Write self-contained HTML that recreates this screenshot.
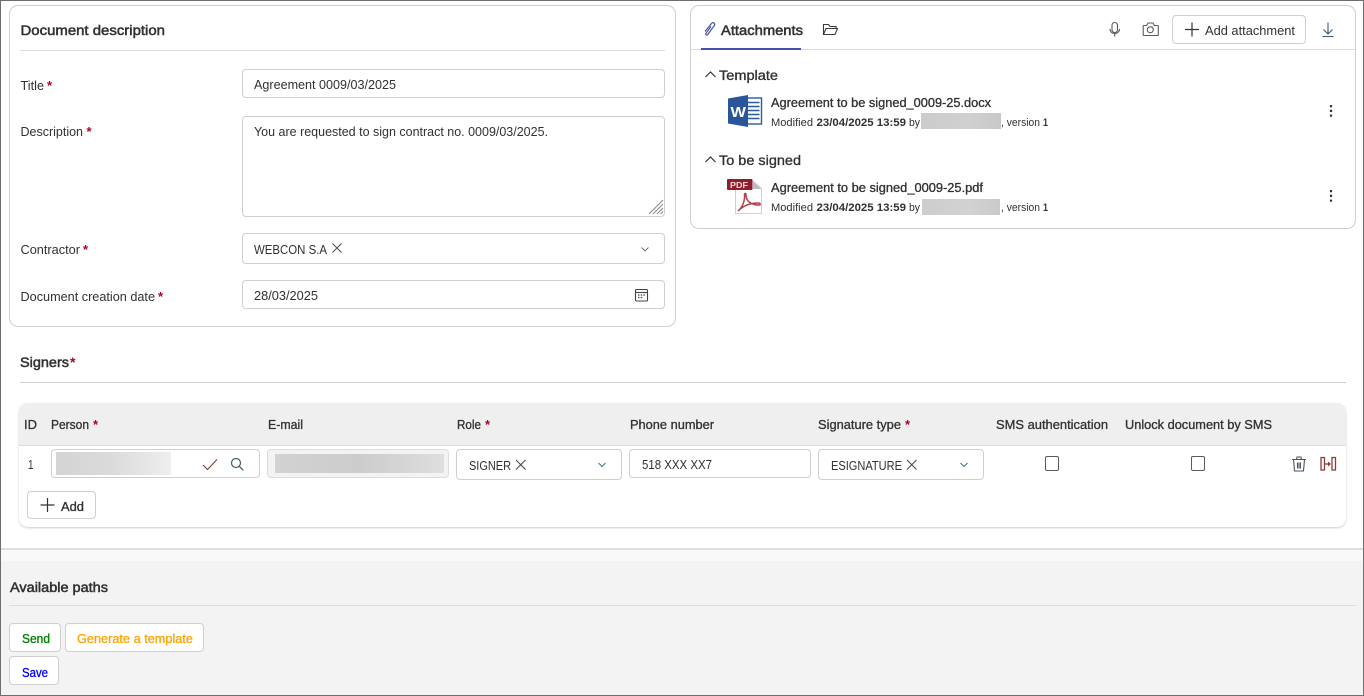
<!DOCTYPE html>
<html lang="en"><head><meta charset="utf-8"><title>Document</title>
<style>
html,body{margin:0;padding:0;background:#fff}
#p{position:relative;width:1364px;height:696px;overflow:hidden;background:#fff;font-family:"Liberation Sans",sans-serif}
#p div{position:absolute;box-sizing:border-box}
.card{border:1px solid #cfcfcf;border-radius:9px;background:#fff}
.in{border:1px solid #cfcfcf;border-radius:4px;background:#fff}
.ln{height:1px;background:#dcdcdc}
svg{position:absolute;left:0;top:0}
text{font-family:"Liberation Sans",sans-serif;font-size:13px;fill:#323130}
.b{font-weight:400;stroke:#323130;stroke-width:.5px;font-size:13.5px}
.h{stroke:#323130;stroke-width:.32px}
.s{font-size:11px}
.sb{font-size:11px;font-weight:700}
.r{fill:#b00020;font-weight:700;font-size:13px}
.ic{fill:none;stroke:#4b4b4b;stroke-width:1.1}
</style></head><body><div id="p">
<div style="left:1px;top:548px;width:1362px;height:13px;background:#f9f9f9;border-top:2px solid #dedede"></div>
<div style="left:1px;top:561px;width:1362px;height:134px;background:#f3f3f3"></div>
<div class="card" style="left:9px;top:5px;width:667px;height:322px"></div>
<div class="card" style="left:690px;top:5px;width:666px;height:224px"></div>
<div class="ln" style="left:20px;top:50px;width:645px"></div>
<div class="ln" style="left:691px;top:49px;width:664px"></div>
<div style="left:701px;top:48px;width:100px;height:2px;background:#4552a8"></div>
<div class="in" style="left:242px;top:69px;width:423px;height:29px"></div>
<div class="in" style="left:242px;top:116px;width:423px;height:101px"></div>
<div class="in" style="left:242px;top:233px;width:423px;height:31px"></div>
<div class="in" style="left:242px;top:280px;width:423px;height:29px"></div>
<div class="in" style="left:1172px;top:15px;width:134px;height:29px"></div>
<div style="left:921px;top:113px;width:80px;height:16px;background:linear-gradient(90deg,#cbcbcb,#d0d0d0 60%,#c8c8c8)"></div>
<div style="left:922px;top:199px;width:78px;height:16px;background:linear-gradient(90deg,#cdcdcd,#d2d2d2 60%,#cacaca)"></div>
<div class="ln" style="left:20px;top:382px;width:1326px;background:#cfcfcf"></div>
<div style="left:19px;top:403px;width:1327px;height:124px;border-radius:9px;background:#fff;box-shadow:0 1px 2px rgba(0,0,0,.2);overflow:hidden">
<div style="left:0;top:0;width:1327px;height:43px;background:#efefef;border-bottom:1px solid #dcdcdc"></div></div>
<div class="in" style="left:51px;top:449px;width:209px;height:29px"></div>
<div style="left:56px;top:452px;width:115px;height:23px;background:linear-gradient(90deg,#d4d4d4,#dadada 45%,#e4e4e4 75%,#efefef)"></div>
<div class="in" style="left:267px;top:449px;width:182px;height:29px;background:#f3f3f3;border-color:#dcdcdc"></div>
<div style="left:275px;top:454px;width:169px;height:19px;background:linear-gradient(90deg,#d2d2d2,#cccccc 50%,#dedede)"></div>
<div class="in" style="left:456px;top:449px;width:166px;height:31px"></div>
<div class="in" style="left:629px;top:449px;width:182px;height:29px"></div>
<div class="in" style="left:818px;top:449px;width:166px;height:31px"></div>
<div class="in" style="left:1045px;top:456px;width:14px;height:15px;border-color:#5a5a5a;border-radius:2px"></div>
<div class="in" style="left:1191px;top:456px;width:14px;height:15px;border-color:#5a5a5a;border-radius:2px"></div>
<div class="in" style="left:27px;top:491px;width:69px;height:28px"></div>
<div class="ln" style="left:9px;top:605px;width:1347px;background:#dcdcdc"></div>
<div class="in" style="left:9px;top:623px;width:52px;height:29px"></div>
<div class="in" style="left:65px;top:623px;width:139px;height:29px"></div>
<div class="in" style="left:9px;top:656px;width:50px;height:29px"></div>
<div style="left:0;top:0;width:1364px;height:696px;border:1px solid #6e6e6e"></div>

<svg width="1364" height="696" viewBox="0 0 1364 696">
<text class="b" x="20.5" y="35" textLength="144.5" lengthAdjust="spacingAndGlyphs">Document description</text>
<text x="20.5" y="90" textLength="23.5" lengthAdjust="spacingAndGlyphs">Title</text><text class="r" x="47" y="90">*</text>
<text x="20.5" y="136" textLength="62.5" lengthAdjust="spacingAndGlyphs">Description</text><text class="r" x="86.5" y="136">*</text>
<text x="20.5" y="254" textLength="59.5" lengthAdjust="spacingAndGlyphs">Contractor</text><text class="r" x="83" y="254">*</text>
<text x="20.5" y="301" textLength="134.5" lengthAdjust="spacingAndGlyphs">Document creation date</text><text class="r" x="158" y="301">*</text>
<text x="254" y="89" textLength="142" lengthAdjust="spacingAndGlyphs">Agreement 0009/03/2025</text>
<text x="254" y="136" textLength="294" lengthAdjust="spacingAndGlyphs">You are requested to sign contract no. 0009/03/2025.</text>
<text x="254" y="254" textLength="73" lengthAdjust="spacingAndGlyphs">WEBCON S.A</text>
<text x="254" y="300" textLength="64" lengthAdjust="spacingAndGlyphs">28/03/2025</text>
<path d="M332.500 243.500l9 9m0-9l-9 9" class="ic" style="stroke:#555"/>
<path d="M641.500 247.500l3.500 3.500 3.500-3.500" class="ic" style="stroke:#666;stroke-width:.9"/>
<g class="ic" style="stroke:#444"><rect x="635.500" y="289.500" width="12" height="11.500" rx="1"/><path d="M636 292.500h11"/></g>
<path d="M638 295h1.500m1.200 0h1.500m1.200 0h1.500M638 297.500h1.500m1.200 0h1.500" stroke="#444" stroke-width="1.200" fill="none"/>
<path d="M649 214l14-14M653 214l10-10M657 214l6-6M660.500 214l2.500-2.500" stroke="#8a8a8a" stroke-width="1" fill="none"/>

<path d="M711 26.500l-5 6.800c-1 1.300.8 2.500 1.800 1.200l6.400-8.800c1.500-2-1-4.200-2.700-2.200l-6.500 8" fill="none" stroke="#4552a8" stroke-width="1.200"/>
<text class="b" x="721" y="35" textLength="82" lengthAdjust="spacingAndGlyphs">Attachments</text>
<path d="M823.500 34.500v-10h5l1.500 2h6v2M823.500 34.500l2.500-6h11.500l-2.500 6z" fill="none" stroke="#3a3a3a" stroke-width="1.100"/>
<g class="ic" style="stroke:#5a5a5a"><rect x="1112" y="22.500" width="5.500" height="10" rx="2.700"/><path d="M1110 29c0 6 9.500 6 9.500 0M1114.700 34v2.500"/></g>
<g class="ic" style="stroke:#5a5a5a"><path d="M1143.500 25.500h3l1.500-2.500h5l1.500 2.500h3a.8.800 0 0 1 .8.800v8.400a.8.800 0 0 1-.8.800h-13.500a.8.800 0 0 1-.8-.8v-8.400a.8.800 0 0 1 .8-.8z"/><circle cx="1150.300" cy="29.800" r="3"/></g>
<path d="M1192 22.500v14M1185 29.500h14" stroke="#333" stroke-width="1.200" fill="none"/>
<text x="1205" y="35" textLength="90" lengthAdjust="spacingAndGlyphs">Add attachment</text>
<path d="M1328 22.500v11.500M1323.500 29.500l4.500 4.500 4.500-4.500M1322.500 36.500h11" fill="none" stroke="#3f5a78" stroke-width="1.100"/>

<path d="M705.500 77l5-5 5 5" fill="none" stroke="#333" stroke-width="1.200"/>
<text class="h" x="719" y="80" textLength="59" lengthAdjust="spacingAndGlyphs" style="font-size:13.500px">Template</text>
<g>
<rect x="746" y="98" width="15.500" height="26" fill="#fff" stroke="#2b5b9e" stroke-width="1.400"/>
<path d="M748 102.500h11.500M748 106.500h11.500M748 110.500h11.500M748 114.500h11.500M748 118.500h11.500" stroke="#2b5b9e" stroke-width="1.600"/>
<path d="M728 98.500L748 95v32l-20-3.500z" fill="#2a5699"/>
<text x="730.500" y="117" style="font-size:15px;font-weight:700;fill:#fff" textLength="15.500" lengthAdjust="spacingAndGlyphs">W</text>
</g>
<text x="771" y="107" textLength="220" lengthAdjust="spacingAndGlyphs" class="h">Agreement to be signed_0009-25.docx</text>
<text class="s" x="771" y="126" textLength="42" lengthAdjust="spacingAndGlyphs">Modified</text>
<text class="sb" x="816.500" y="126" textLength="89.500" lengthAdjust="spacingAndGlyphs">23/04/2025 13:59</text>
<text class="s" x="909" y="126" textLength="11" lengthAdjust="spacingAndGlyphs">by</text>
<text class="s" x="1001" y="126" textLength="39" lengthAdjust="spacingAndGlyphs">, version</text>
<text class="sb" x="1043" y="126" textLength="5" lengthAdjust="spacingAndGlyphs">1</text>
<path d="M1331 105v2.200M1331 109.800v2.200M1331 114.600v2.200" stroke="#333" stroke-width="2.200"/>

<path d="M705.500 162l5-5 5 5" fill="none" stroke="#333" stroke-width="1.200"/>
<text class="h" x="719" y="165" textLength="82" lengthAdjust="spacingAndGlyphs" style="font-size:13.500px">To be signed</text>
<g>
<path d="M735.500 181.500h18l8 7v25h-26z" fill="#fff" stroke="#cfcfcf"/>
<path d="M753 181.500v7.500h8.500z" fill="#bdbdbd"/>
<rect x="727" y="179" width="25.500" height="11" rx="1" fill="#8f1d2c"/>
<text x="730" y="188" style="font-size:8.500px;font-weight:700;fill:#f3dada" textLength="18" lengthAdjust="spacingAndGlyphs">PDF</text>
<path d="M738 211c5-4 7-11 6.500-16-.4-2 1.500-2 1.500 0 0 6 5 10 13 10 2 0 1.500-2-1-2-8 0-15 3-20 8z" fill="none" stroke="#b5404a" stroke-width="1.500"/>
</g>
<text x="771" y="192" textLength="212" lengthAdjust="spacingAndGlyphs" class="h">Agreement to be signed_0009-25.pdf</text>
<text class="s" x="771" y="211" textLength="42" lengthAdjust="spacingAndGlyphs">Modified</text>
<text class="sb" x="816.500" y="211" textLength="89.500" lengthAdjust="spacingAndGlyphs">23/04/2025 13:59</text>
<text class="s" x="909" y="211" textLength="11" lengthAdjust="spacingAndGlyphs">by</text>
<text class="s" x="1001" y="211" textLength="39" lengthAdjust="spacingAndGlyphs">, version</text>
<text class="sb" x="1043" y="211" textLength="5" lengthAdjust="spacingAndGlyphs">1</text>
<path d="M1331 190v2.200M1331 194.800v2.200M1331 199.600v2.200" stroke="#333" stroke-width="2.200"/>

<text class="b" x="20" y="367" textLength="49" lengthAdjust="spacingAndGlyphs">Signers</text><text class="r" x="70" y="367" style="font-size:14px">*</text>

<text class="h" x="24" y="429" textLength="13" lengthAdjust="spacingAndGlyphs">ID</text>
<text class="h" x="51" y="429" textLength="38" lengthAdjust="spacingAndGlyphs">Person</text><text class="r" x="93" y="429">*</text>
<text class="h" x="268" y="429" textLength="35" lengthAdjust="spacingAndGlyphs">E-mail</text>
<text class="h" x="457" y="429" textLength="24" lengthAdjust="spacingAndGlyphs">Role</text><text class="r" x="485" y="429">*</text>
<text class="h" x="630" y="429" textLength="84" lengthAdjust="spacingAndGlyphs">Phone number</text>
<text class="h" x="818" y="429" textLength="83" lengthAdjust="spacingAndGlyphs">Signature type</text><text class="r" x="905" y="429">*</text>
<text class="h" x="996" y="429" textLength="112" lengthAdjust="spacingAndGlyphs">SMS authentication</text>
<text class="h" x="1125" y="429" textLength="147" lengthAdjust="spacingAndGlyphs">Unlock document by SMS</text>

<text x="28" y="469" textLength="5.500" lengthAdjust="spacingAndGlyphs">1</text>
<path d="M203 465l4.500 4.500 9.500-10" fill="none" stroke="#7a4a3c" stroke-width="1.200"/>
<circle cx="236" cy="463" r="4.500" fill="none" stroke="#3f5f60" stroke-width="1.200"/><path d="M239.300 466.300l4 4" stroke="#3f5f60" stroke-width="1.200"/>
<text x="469" y="470" textLength="42" lengthAdjust="spacingAndGlyphs">SIGNER</text>
<path d="M516 460l9.500 9.500m0-9.500l-9.500 9.500" class="ic"/>
<path d="M598.500 463l3.500 3.500 3.500-3.500" fill="none" stroke="#3f6f80" stroke-width="1"/>
<text x="642" y="469" textLength="70" lengthAdjust="spacingAndGlyphs">518 XXX XX7</text>
<text x="831" y="470" textLength="71" lengthAdjust="spacingAndGlyphs">ESIGNATURE</text>
<path d="M907 460l9.500 9.500m0-9.500l-9.500 9.500" class="ic"/>
<path d="M960.500 463l3.500 3.500 3.500-3.500" fill="none" stroke="#3f6f80" stroke-width="1"/>
<g fill="none" stroke="#4b5560" stroke-width="1.100"><path d="M1292 459.500h14M1296.500 459.500l.5-2.500h4l.5 2.500M1293.500 459.500l1 11.500h9l1-11.500M1297.500 462.500v6M1299 462.500v6M1300.500 462.500v6"/></g>
<g fill="none" stroke="#8c3a3f" stroke-width="1.300"><path d="M1321 457.500h3.500v12.500h-3.500zM1332 457.500h3.500v12.500h-3.500zM1325 464h4.500"/></g><path d="M1328 461.500l3 2.500-3 2.500z" fill="#8c3a3f"/>
<path d="M47.500 498v14M40.500 505h14" stroke="#333" stroke-width="1.200" fill="none"/>
<text x="61" y="511" textLength="23" lengthAdjust="spacingAndGlyphs" class="h">Add</text>

<text class="b" x="10" y="592" textLength="98" lengthAdjust="spacingAndGlyphs">Available paths</text>
<text class="h" x="22" y="643" textLength="28" lengthAdjust="spacingAndGlyphs" style="fill:#008000;stroke:#008000">Send</text>
<text class="h" x="77" y="643" textLength="116" lengthAdjust="spacingAndGlyphs" style="fill:#ffa500;stroke:#ffa500">Generate a template</text>
<text class="h" x="22" y="677" textLength="26" lengthAdjust="spacingAndGlyphs" style="fill:#0000ff;stroke:#0000ff">Save</text>
</svg>
</div></body></html>
